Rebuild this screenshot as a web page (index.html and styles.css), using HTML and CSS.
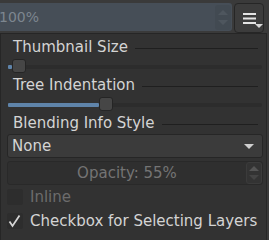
FILE: index.html
```html
<!DOCTYPE html>
<html lang="en">
<head>
  <meta charset="UTF-8" />
  <title>Layer Docker Options</title>
  <link rel="stylesheet" href="styles.css">
</head>
<body>
  <div class="topbar">
    <div class="zoom-box">
      <span class="zoom-value">100%</span>
      <div class="spin-btns">
        <span class="arrow-up"></span>
        <span class="arrow-down"></span>
      </div>
    </div>
    <button class="menu-btn">
      <svg width="13" height="11" viewBox="0 0 13 11">
        <rect x="0" y="0" width="13" height="2" fill="#e4e4e4"/>
        <rect x="0" y="4.5" width="13" height="2" fill="#e4e4e4"/>
        <rect x="0" y="9" width="13" height="2" fill="#e4e4e4"/>
      </svg>
      <span class="menu-caret"></span>
    </button>
  </div>

  <div class="popup">
    <div class="section-title"><span>Thumbnail Size</span><i></i></div>
    <div class="slider">
      <div class="fill" style="width: 4px"></div>
      <div class="handle" style="left: 4px"></div>
    </div>

    <div class="section-title"><span>Tree Indentation</span><i></i></div>
    <div class="slider">
      <div class="fill" style="width: 91px"></div>
      <div class="handle" style="left: 91px"></div>
    </div>

    <div class="section-title"><span>Blending Info Style</span><i></i></div>
    <div class="combo">
      <span>None</span>
      <span class="combo-arrow"></span>
    </div>
    <div class="spinbox disabled">
      <span class="spin-text">Opacity: 55%</span>
      <div class="spin-side">
        <span class="arrow-up"></span>
        <span class="arrow-down"></span>
      </div>
    </div>

    <label class="check disabled"><span class="box"></span>Inline</label>
    <label class="check">
      <span class="box">
        <svg width="14" height="14" viewBox="0 0 14 14">
          <polyline points="1.5,7.5 4.5,12 11.5,1.5" fill="none" stroke="#d4d4d4" stroke-width="1.8"/>
        </svg>
      </span>
      Checkbox for Selecting Layers
    </label>
  </div>
</body>
</html>
```

FILE: styles.css
```css
body {
  margin: 0;
  width: 269px;
  height: 240px;
  overflow: hidden;
  background: #3a3a3a;
  font-family: "DejaVu Sans", sans-serif;
  font-size: 15px;
  color: #d4d4d4;
}
.topbar {
  display: flex;
  align-items: flex-start;
  height: 33px;
}
.zoom-box {
  display: flex;
  align-items: center;
  width: 232px;
  height: 28px;
  margin-top: 3px;
  background: #464e57;
  border-radius: 0 3px 3px 0;
}
.zoom-value {
  flex: 1;
  margin-left: -1px;
  font-size: 14px;
  color: #7d868f;
}
.spin-btns {
  width: 16px;
  height: 25px;
  margin-right: 1px;
  display: flex;
  flex-direction: column;
  align-items: center;
  justify-content: center;
  gap: 5px;
  background: #424a52;
  border-radius: 3px;
}
.arrow-up, .arrow-down {
  width: 0;
  height: 0;
  border-left: 5px solid transparent;
  border-right: 5px solid transparent;
}
.spin-btns .arrow-up { border-bottom: 5px solid #4e565e; }
.spin-btns .arrow-down { border-top: 5px solid #4e565e; }
.menu-btn {
  position: relative;
  width: 30px;
  height: 30px;
  margin: 3px 0 0 2px;
  padding: 0;
  background: #3c3c3c;
  border: 1px solid #262626;
  border-radius: 4px;
  display: flex;
  align-items: center;
  justify-content: center;
}
.menu-caret {
  position: absolute;
  right: 0;
  bottom: 4px;
  width: 0;
  height: 0;
  border-left: 4px solid transparent;
  border-right: 4px solid transparent;
  border-top: 4px solid #d8d8d8;
}
.popup {
  width: 267px;
  height: 207px;
  box-sizing: border-box;
  padding: 4px 3px 0 6px;
  background: #323232;
  border: 1px solid #262626;
  border-bottom: none;
}
.section-title {
  display: flex;
  align-items: center;
  gap: 7px;
  height: 19px;
  line-height: 19px;
  padding: 0 5px 0 6px;
  white-space: nowrap;
}
.section-title i {
  flex: 1;
  height: 1px;
  background: #1f1f1f;
  margin-top: 1px;
}
.slider {
  position: relative;
  height: 19px;
  margin: 0 1px 0 1px;
}
.slider::before {
  content: "";
  position: absolute;
  left: 0;
  right: 0;
  top: 8px;
  height: 4px;
  background: #2c2c2c;
  border-radius: 2px;
}
.slider .fill {
  position: absolute;
  left: 0;
  top: 8px;
  height: 4px;
  background: #5f84aa;
  border-radius: 1px;
}
.slider .handle {
  position: absolute;
  top: 2px;
  width: 14px;
  height: 14px;
  box-sizing: border-box;
  background: #464646;
  border: 1px solid #252525;
  border-radius: 3px;
}
.combo {
  display: flex;
  align-items: center;
  justify-content: space-between;
  height: 24px;
  box-sizing: border-box;
  margin-top: 1px;
  padding: 0 8px 0 4px;
  background: #3b3b3b;
  border: 1px solid #262626;
  border-radius: 3px;
}
.combo-arrow {
  width: 0;
  height: 0;
  border-left: 5px solid transparent;
  border-right: 5px solid transparent;
  border-top: 5px solid #cfcfcf;
}
.spinbox {
  display: flex;
  align-items: stretch;
  height: 24px;
  box-sizing: border-box;
  margin-top: 3px;
  background: #2f2f2f;
  border: 1px solid #292929;
  border-radius: 3px;
}
.spin-text {
  flex: 1;
  text-align: center;
  line-height: 22px;
  color: #747474;
}
.spin-side {
  width: 16px;
  box-sizing: border-box;
  display: flex;
  flex-direction: column;
  align-items: center;
  justify-content: center;
  gap: 4px;
  background: #333;
  border: 1px solid #3b3b3b;
  border-radius: 3px;
}
.spin-side .arrow-up { border-bottom: 5px solid #555; }
.spin-side .arrow-down { border-top: 5px solid #444; }
.check {
  display: flex;
  align-items: center;
  gap: 7px;
  height: 24px;
}
.check .box {
  width: 16px;
  height: 16px;
  background: #2d2d2d;
  border-radius: 2px;
  display: flex;
  align-items: center;
  justify-content: center;
}
.check.disabled {
  color: #6c6c6c;
}
```
